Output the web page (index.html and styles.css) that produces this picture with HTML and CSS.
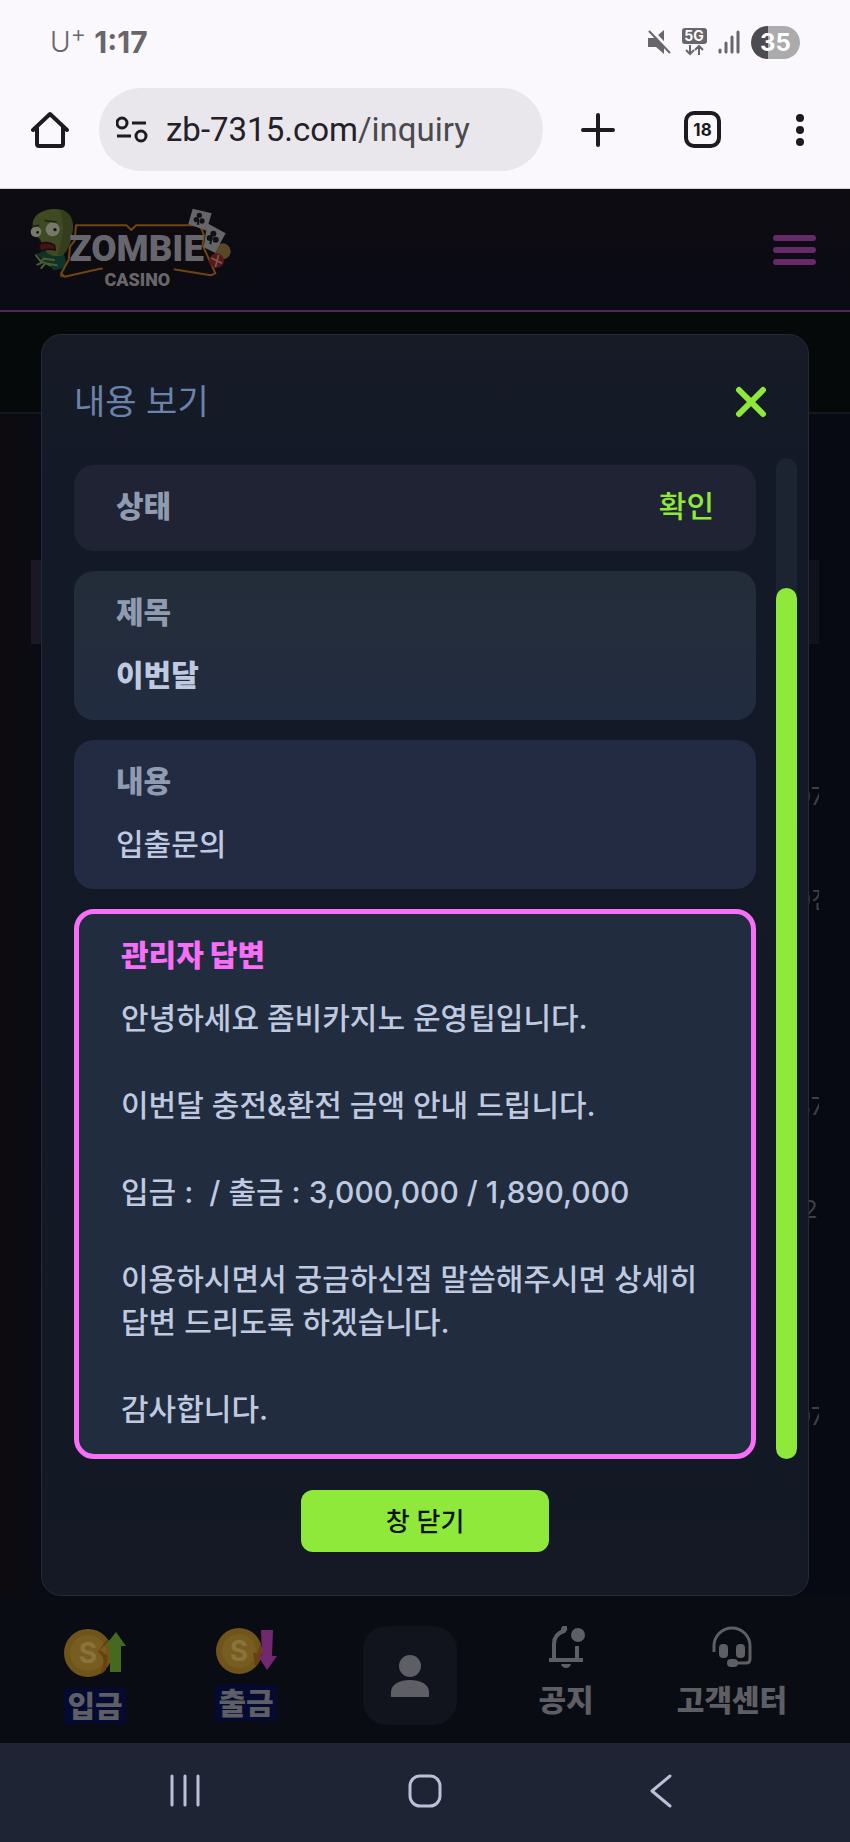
FILE: index.html
```html
<!DOCTYPE html>
<html lang="ko">
<head>
    <meta charset="UTF-8">
    <meta name="viewport" content="width=device-width, initial-scale=1.0">
    <title>Zombie Casino</title>
    <link rel="stylesheet" href="styles.css">
</head>
<body>

<!-- phone status bar -->
<div class="status-bar">
    <div class="carrier">U<sup>+</sup></div>
    <div class="clock">1:17</div>
    <div class="status-icons">
        <svg width="24" height="26" viewBox="0 0 24 26">
            <path d="M17 1v12l-7-6z" fill="#68666b"/>
            <path d="M1 9h7l9 9v7l-8-7H1z" fill="#68666b"/>
            <path d="M4 0l21 22" stroke="#faf8fc" stroke-width="2"/>
            <path d="M2 2l21 22" stroke="#68666b" stroke-width="2"/>
        </svg>
        <svg width="25" height="30" viewBox="0 0 25 30">
            <rect width="25" height="16" y="1" rx="3" fill="#68666b"/>
            <text class="net-text" x="12" y="14" text-anchor="middle">5G</text>
            <path d="M8 18v9M4 23l4 4 4-4M17 28v-9M13 23l4-4 4 4" stroke="#68666b" stroke-width="2" fill="none"/>
        </svg>
        <svg width="22" height="24" viewBox="0 0 22 24">
            <path d="M2 20v2M8 13v9M14 7v15M20 2v20" stroke="#68666b" stroke-width="3" stroke-linecap="round"/>
        </svg>
        <div class="battery">35</div>
    </div>
</div>

<!-- browser toolbar -->
<div class="toolbar">
    <button class="icon-btn" aria-label="Home">
        <svg width="38" height="38" viewBox="0 0 38 38" fill="none" stroke="#1d1b20" stroke-width="4" stroke-linecap="round" stroke-linejoin="round">
            <path d="M2 19L19 3l17 16M6 16v17q0 2 2 2h22q2 0 2-2V16"/>
        </svg>
    </button>
    <div class="address">
        <svg width="32" height="28" viewBox="0 0 32 28" fill="none" stroke="#1d1b20" stroke-width="3">
            <circle cx="6" cy="7" r="5"/>
            <path d="M16 7h14M1 20h14"/>
            <circle cx="25" cy="20" r="5"/>
        </svg>
        <a href="#">zb-7315.com<span>/inquiry</span></a>
    </div>
    <div class="toolbar-actions">
        <button class="icon-btn" aria-label="New tab">
            <svg width="34" height="34" viewBox="0 0 34 34" stroke="#1d1b20" stroke-width="4" stroke-linecap="round">
                <path d="M17 2v30M2 17h30"/>
            </svg>
        </button>
        <button class="tabs">18</button>
        <button class="icon-btn" aria-label="Menu">
            <svg width="10" height="34" viewBox="0 0 10 34" fill="#1d1b20">
                <circle cx="5" cy="5" r="4"/>
                <circle cx="5" cy="17" r="4"/>
                <circle cx="5" cy="29" r="4"/>
            </svg>
        </button>
    </div>
</div>

<div class="site">
    <header class="site-header">
        <a href="#" aria-label="Zombie Casino">
            <svg class="logo" width="203" height="90" viewBox="90 57 609 270">
                <!-- zombie -->
                <path d="M110 205l30-15 50 5 12 50-40 8z" fill="#0f3328"/>
                <path d="M98 112c2-30 40-46 72-43 36 3 52 30 48 62-3 30-10 50-24 70-10 14-40 12-54-2-10-10-14-26-20-40-16-8-22-24-22-47z" fill="#3f4a22"/>
                <path d="M180 70c30 6 42 32 38 62-3 30-10 50-24 70-6 6-14 6-22 4 16-40 24-90 8-136z" fill="#343d1c"/>
                <circle cx="108" cy="137" r="16" fill="#77776a"/>
                <circle cx="158" cy="130" r="21" fill="#77776a"/>
                <circle cx="113" cy="139" r="4" fill="#111"/>
                <circle cx="165" cy="131" r="5" fill="#111"/>
                <path d="M96 122l22-4M134 104l36 4" stroke="#1d2410" stroke-width="5"/>
                <path d="M116 176q24-14 48 2l2 14q-26-6-44 4z" fill="#441313" stroke="#1a0a0a" stroke-width="4"/>
                <path d="M108 208l14 18 10-8 30 4M112 236l18-8 20 10M124 246l12-14 34 6" stroke="#4a5b34" stroke-width="6" fill="none" stroke-linecap="round"/>
                <circle cx="188" cy="266" r="8" fill="#6b3a12"/>
                <!-- plate -->
                <path d="M228 118H380l14 14 14-14H600l12 30-4 30 30 66 8 18-14 6-120-20H300L194 272l-10-10 22-40 4-40 14-18z" fill="#0d0a10" stroke="#6f4511" stroke-width="6" stroke-linejoin="round"/>
                <path d="M310 240h212l-4 66H296z" fill="#0d0a10"/>
                <!-- cards and chips -->
                <circle cx="668" cy="196" r="24" fill="#57482a"/>
                <circle cx="650" cy="224" r="22" fill="#5a1717"/>
                <path d="M634 216l32 16M656 206l-10 38" stroke="#6f5a5a" stroke-width="5"/>
                <path d="M578 68l57 14-16 52-54-20z" fill="#66666a"/>
                <path d="M622 112l55 30-32 58-34-16z" fill="#66666a"/>
                <g fill="#121216">
                    <circle cx="598" cy="88" r="8"/>
                    <circle cx="589" cy="101" r="8"/>
                    <circle cx="606" cy="105" r="8"/>
                    <path d="M596 96l2 20h-8z"/>
                    <circle cx="640" cy="143" r="9"/>
                    <circle cx="629" cy="156" r="9"/>
                    <circle cx="647" cy="161" r="9"/>
                    <path d="M638 152l-4 24-7-4z"/>
                </g>
                <text class="logo-main" x="410" y="226" text-anchor="middle">ZOMBIE</text>
                <text class="logo-sub" x="412" y="301" text-anchor="middle">CASINO</text>
            </svg>
        </a>
        <button class="menu-btn" aria-label="메뉴"><i></i><i></i><i></i></button>
    </header>

    <div class="stage">
        <!-- dimmed inquiry list under the popup -->
        <main class="list-page">
            <div class="list-top"></div>
            <div class="list">
                <div class="list-head"></div>
                <div class="list-cell first"><span>07</span></div>
                <div class="list-cell"><span>0전</span></div>
                <div class="list-cell skip"><span>37</span></div>
                <div class="list-cell"><span>:2</span></div>
                <div class="list-cell skip"><span>07</span></div>
            </div>
        </main>

        <section class="modal" role="dialog" aria-labelledby="modal-title">
            <div class="modal-header">
                <h1 id="modal-title">내용 보기</h1>
                <button class="icon-btn" aria-label="닫기">
                    <svg width="32" height="32" viewBox="0 0 32 32" stroke="#8ee93a" stroke-width="6" stroke-linecap="round">
                        <path d="M4 4l24 24M28 4L4 28"/>
                    </svg>
                </button>
            </div>

            <div class="modal-scroll">
                <div class="cards">
                    <div class="card status">
                        <h2>상태</h2>
                        <p class="ok">확인</p>
                    </div>
                    <div class="card subject">
                        <h2>제목</h2>
                        <p><strong>이번달</strong></p>
                    </div>
                    <div class="card content">
                        <h2>내용</h2>
                        <p>입출문의</p>
                    </div>
                    <div class="card answer">
                        <h2>관리자 답변</h2>
                        <div class="answer-text">
                            <p>안녕하세요 좀비카지노 운영팁입니다.</p>
                            <p>이번달 충전&amp;환전 금액 안내 드립니다.</p>
                            <p>입금 :&nbsp; / 출금 : 3,000,000 / 1,890,000</p>
                            <p>이용하시면서 궁금하신점 말씀해주시면 상세히 답변 드리도록 하겠습니다.</p>
                            <p>감사합니다.</p>
                        </div>
                    </div>
                </div>
                <div class="track"><div class="thumb"></div></div>
            </div>

            <button class="close-btn">창 닫기</button>
        </section>
    </div>

    <nav class="bottom-nav">
        <a href="#" class="nav-item money">
            <svg width="62" height="52" viewBox="0 0 62 52">
                <circle cx="24" cy="27" r="24" fill="#70551a"/>
                <circle cx="24" cy="27" r="18" fill="#785d20"/>
                <path d="M46 14L36 24l8 6-2 14q-4 4-6 4 8-16-2-22l8-12z" fill="#6b3f12"/>
                <text class="coin-text" x="24" y="37" text-anchor="middle">S</text>
                <path d="M52 6l10 14h-5v26H46V20h-5z" fill="#45691f"/>
            </svg>
            <span>입금</span>
        </a>
        <a href="#" class="nav-item money">
            <svg width="62" height="49" viewBox="0 0 62 49">
                <circle cx="24" cy="25" r="23" fill="#70551a"/>
                <circle cx="24" cy="25" r="17" fill="#785d20"/>
                <path d="M46 16l-4 12-4-2 2 14q4-2 6-8z" fill="#6b3f12"/>
                <text class="coin-text" x="24" y="35" text-anchor="middle">S</text>
                <path d="M46 4h12l-1 26h5L52 44 43 30h4z" fill="#72286f"/>
            </svg>
            <span>출금</span>
        </a>
        <a href="#" class="nav-user" aria-label="내 정보">
            <svg width="38" height="44" viewBox="0 0 38 44" fill="#5d5f64">
                <circle cx="19" cy="12" r="11"/>
                <path d="M0 43V38C0 30 9 26 19 26s19 4 19 12v5z"/>
            </svg>
        </a>
        <a href="#" class="nav-item">
            <svg width="38" height="46" viewBox="0 0 38 46" fill="none" stroke="#5d5f64" stroke-width="4">
                <path d="M2 34h34M7 34V18q0-10 10-13l2-3M30 34V20"/>
                <path d="M16 6q0-5 4-5" stroke-width="5"/>
                <circle cx="31" cy="9" r="7" fill="#5d5f64" stroke="none"/>
                <path d="M14 38h10q-1 4-5 4t-5-4z" fill="#5d5f64" stroke="none"/>
            </svg>
            <span>공지</span>
        </a>
        <a href="#" class="nav-item">
            <svg width="40" height="46" viewBox="0 0 40 46" fill="none" stroke="#5d5f64" stroke-width="3">
                <path d="M2 26V20a18 18 0 0 1 36 0v13q0 4-4 4H22"/>
                <rect x="7" y="18" width="9" height="14" rx="4" fill="#5d5f64" stroke="none"/>
                <rect x="24" y="18" width="9" height="14" rx="4" fill="#5d5f64" stroke="none"/>
                <rect x="15" y="33" width="11" height="8" rx="4" fill="#5d5f64" stroke="none"/>
            </svg>
            <span>고객센터</span>
        </a>
    </nav>
</div>

<!-- phone navigation -->
<div class="system-nav">
    <button class="icon-btn" aria-label="최근 앱">
        <svg width="30" height="34" viewBox="0 0 30 34" stroke="#b9c1d8" stroke-width="3" stroke-linecap="round">
            <path d="M2 2v29M15 2v29M28 2v29"/>
        </svg>
    </button>
    <button class="icon-btn" aria-label="홈">
        <svg width="34" height="34" viewBox="0 0 34 34" fill="none" stroke="#b9c1d8" stroke-width="3">
            <rect x="2" y="2" width="30" height="30" rx="10"/>
        </svg>
    </button>
    <button class="icon-btn" aria-label="뒤로">
        <svg width="30" height="34" viewBox="0 0 30 34" fill="none" stroke="#b9c1d8" stroke-width="3" stroke-linecap="round" stroke-linejoin="round">
            <path d="M20 2L2 17l18 15"/>
        </svg>
    </button>
</div>

</body>
</html>
```
FILE: styles.css
```css
* {
    box-sizing: border-box;
}

body {
    display: flex;
    flex-direction: column;
    min-height: 100vh;
    margin: 0;
    font-family: Inter, "Noto Sans CJK KR", sans-serif;
    background-color: #faf8fc;
}

h1, h2, p {
    margin: 0;
}

a {
    color: inherit;
    text-decoration: none;
}

button {
    padding: 0;
    border: none;
    background: none;
    font-family: inherit;
    cursor: pointer;
}

svg {
    display: block;
}

.icon-btn {
    flex: none;
}

/* status bar */
.status-bar {
    display: flex;
    align-items: center;
    height: 84px;
    padding: 0 50px;
    color: #68666b;
}

.carrier {
    font-size: 28px;
    font-weight: 300;
    line-height: 32px;
}

.carrier sup {
    font-size: 24px;
    line-height: 0;
}

.clock {
    margin-left: 8px;
    font-size: 30px;
    font-weight: 700;
}

.status-icons {
    display: flex;
    align-items: center;
    gap: 11px;
    margin-left: auto;
}

.net-text {
    font-size: 14px;
    font-weight: 700;
    fill: #fff;
}

.battery {
    width: 49px;
    height: 33px;
    border-radius: 17px;
    background: linear-gradient(90deg, #4d4a50 35%, #ababad 35%);
    color: #fff;
    font-size: 24px;
    font-weight: 700;
    line-height: 33px;
    text-align: center;
}

/* browser toolbar */
.toolbar {
    display: flex;
    align-items: center;
    height: 105px;
    padding: 4px 45px 17px 31px;
    border-bottom: 1px solid #d4d2da;
}

.address {
    display: flex;
    align-items: center;
    gap: 18px;
    flex: 0 1 444px;
    height: 83px;
    margin-left: 30px;
    padding: 0 17px;
    border-radius: 42px;
    background-color: #e9e7ec;
    color: #232127;
    font-family: Roboto, sans-serif;
    font-size: 33px;
}

.address span {
    color: #4b494e;
}

.toolbar-actions {
    display: flex;
    align-items: center;
    justify-content: space-between;
    flex: 1;
    margin-left: 38px;
}

.tabs {
    width: 37px;
    height: 37px;
    margin-right: 5px;
    border: 4px solid #1d1b20;
    border-radius: 10px;
    color: #1d1b20;
    font-size: 17px;
    font-weight: 700;
}

/* site header */
.site {
    display: flex;
    flex-direction: column;
    flex: 1;
    background-color: #080b12;
}

.site-header {
    display: flex;
    align-items: center;
    justify-content: space-between;
    height: 123px;
    padding: 0 34px 0 30px;
    border-bottom: 2px solid #4b2a52;
    background: linear-gradient(#0d0c11, #0b0b16);
}

.logo text {
    font-family: Roboto, sans-serif;
    font-weight: 900;
    fill: #67666c;
}

.logo .logo-main {
    font-size: 110px;
}

.logo .logo-sub {
    font-size: 54px;
}

.menu-btn {
    display: flex;
    flex-direction: column;
    gap: 6px;
}

.menu-btn i {
    width: 43px;
    height: 6px;
    border-radius: 3px;
    background-color: #652a67;
}

/* page under the popup, both share one grid cell */
.stage {
    display: grid;
    flex: 1;
}

.list-page,
.modal {
    grid-area: 1 / 1;
    min-width: 0;
}

.list-page {
    background: linear-gradient(90deg, #0e0b0f, #080b15 6%, #070a13);
}

.list-top {
    height: 102px;
    border-bottom: 2px solid #14171d;
    background-color: #050909;
}

.list {
    margin: 146px 31px 0;
    overflow: hidden;
}

.list-head {
    height: 84px;
    background: linear-gradient(90deg, #191824, #10131d);
}

.list-cell {
    display: flex;
    justify-content: flex-end;
    height: 40px;
    margin-top: 63px;
    color: #3d4046;
    font-size: 24px;
    line-height: 40px;
}

.list-cell.first {
    margin-top: 133px;
}

.list-cell.skip {
    margin-top: 167px;
}

.list-cell span {
    width: 23px;
    white-space: nowrap;
}

/* popup */
.modal {
    display: flex;
    flex-direction: column;
    margin: 22px 41px 0;
    border: 1px solid #252b36;
    border-radius: 20px;
    background: linear-gradient(#161b26, #131927 12%, #121824 88%, #151926);
}

.modal-header {
    display: flex;
    align-items: center;
    justify-content: space-between;
    padding: 42px 41px 31px 32px;
}

.modal-header h1 {
    color: #6d82ab;
    font-size: 34px;
    font-weight: 400;
    line-height: 50px;
}

.modal-scroll {
    display: flex;
    gap: 20px;
    padding: 0 11px 0 32px;
}

.cards {
    display: flex;
    flex-direction: column;
    flex: 1;
    gap: 20px;
    padding-top: 7px;
}

.card {
    display: flex;
    flex-direction: column;
    gap: 20px;
    padding: 20px 42px 23px;
    border-radius: 20px;
    color: #bfc9e0;
    font-size: 30px;
    font-weight: 500;
    line-height: 43px;
    word-break: keep-all;
}

.card h2 {
    color: #8f9bb0;
    font-size: 30px;
    font-weight: 900;
}

.card strong {
    font-weight: 900;
}

.card.status {
    flex-direction: row;
    justify-content: space-between;
    background-color: #1f2333;
}

.card .ok {
    color: #8ee93a;
}

.card.subject {
    background: linear-gradient(#232d39, #222c40);
}

.card.content {
    background-color: #232b43;
}

.card.answer {
    border: 5px solid #f56ff7;
    background-color: #212c3f;
}

.card.answer h2 {
    color: #f56ff7;
}

.answer-text {
    display: flex;
    flex-direction: column;
    gap: 44px;
}

.track {
    display: flex;
    align-items: flex-end;
    width: 21px;
    border-radius: 11px;
    background-color: #1c2331;
}

.thumb {
    width: 100%;
    height: 87%;
    border-radius: 11px;
    background-color: #8ee93a;
}

.close-btn {
    align-self: center;
    width: 248px;
    height: 62px;
    margin: 31px 0 43px;
    padding-bottom: 3px;
    border-radius: 12px;
    background-color: #8ee93a;
    color: #0b120a;
    font-size: 26px;
    font-weight: 500;
}

/* site bottom menu */
.bottom-nav {
    display: grid;
    grid-template-columns: 190fr 112fr 216fr 96fr 236fr;
    align-items: start;
    justify-items: center;
    padding: 30px 0 18px;
    background-color: #0a0c14;
}

.nav-item {
    display: flex;
    flex-direction: column;
    align-items: center;
    gap: 10px;
    color: #5d5f64;
    font-size: 30px;
    font-weight: 900;
    line-height: 36px;
}

.nav-item.money span {
    padding: 0 3px;
    background-color: #040a30;
}

.coin-text {
    font-size: 28px;
    font-weight: 700;
    fill: #8b743c;
}

.nav-user {
    display: flex;
    align-items: center;
    justify-content: center;
    width: 94px;
    height: 99px;
    border-radius: 24px;
    background-color: #11141c;
}

/* phone navigation */
.system-nav {
    display: flex;
    align-items: center;
    justify-content: space-between;
    height: 99px;
    padding: 0 20% 3px;
    background-color: #1e2434;
}
```
